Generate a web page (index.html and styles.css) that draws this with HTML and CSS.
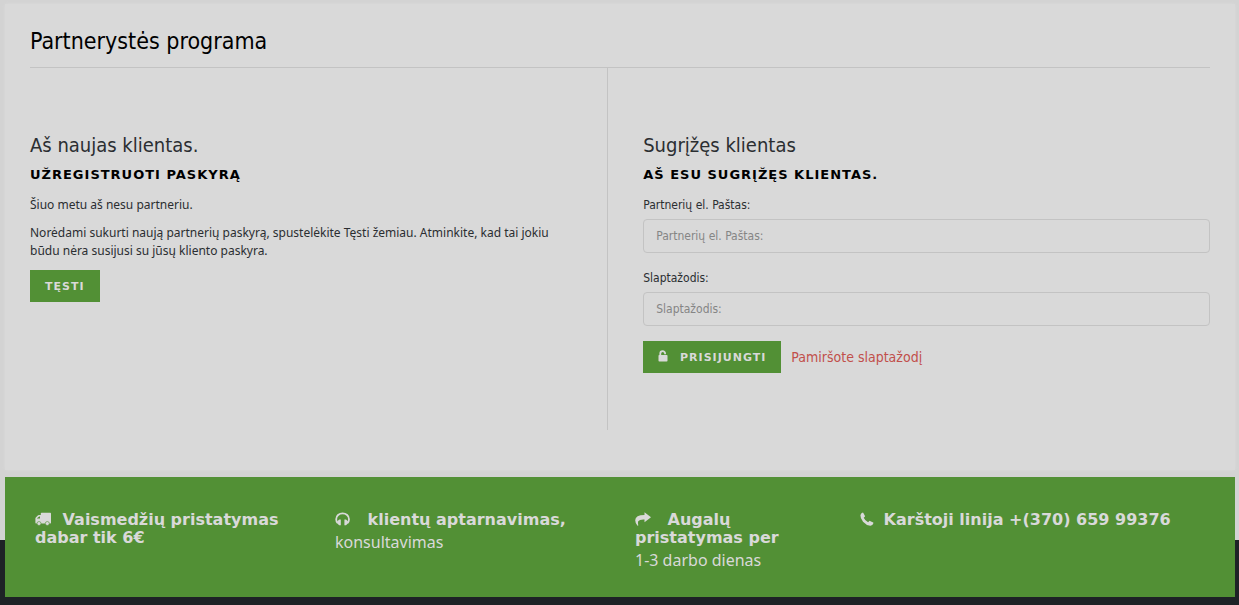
FILE: index.html
```html
<!DOCTYPE html>
<html lang="lt">
<head>
    <meta charset="UTF-8">
    <meta name="viewport" content="width=device-width, initial-scale=1.0">
    <title>Partnerystės programa</title>
    <link rel="stylesheet" href="styles.css">
</head>
<body>
    <div class="page">
        <main class="content">
            <h1>Partnerystės programa</h1>
            <div class="columns">
                <section class="new-client">
                    <h2>Aš naujas klientas.</h2>
                    <h3>Užregistruoti paskyrą</h3>
                    <p>Šiuo metu aš nesu partneriu.</p>
                    <p>Norėdami sukurti naują partnerių paskyrą, spustelėkite Tęsti žemiau. Atminkite, kad tai jokiu būdu nėra susijusi su jūsų kliento paskyra.</p>
                    <button type="button" class="btn">Tęsti</button>
                </section>
                <section class="login">
                    <h2>Sugrįžęs klientas</h2>
                    <h3>Aš esu sugrįžęs klientas.</h3>
                    <form action="#" method="post">
                        <div class="form-group">
                            <label for="email">Partnerių el. Paštas:</label>
                            <input type="text" name="email" id="email" placeholder="Partnerių el. Paštas:">
                        </div>
                        <div class="form-group">
                            <label for="password">Slaptažodis:</label>
                            <input type="password" name="password" id="password" placeholder="Slaptažodis:">
                        </div>
                        <div class="actions">
                            <button type="submit" class="btn">
                                <svg class="lock" viewBox="0 0 10 12" width="10" height="12" aria-hidden="true">
                                    <path d="M2.300 6V3.500a2.400 2.400 0 0 1 4.800 0V4.300" fill="none" stroke="currentColor" stroke-width="1.800"/>
                                    <rect x="0.500" y="5" width="9" height="6.500" rx="0.800" fill="currentColor"/>
                                </svg>
                                Prisijungti
                            </button>
                            <a href="#" class="forgot">Pamiršote slaptažodį</a>
                        </div>
                    </form>
                </section>
            </div>
        </main>
        <div class="promo">
            <div class="promo-item">
                <h4>
                    <svg viewBox="0 0 16 14" width="16" height="14" aria-hidden="true">
                        <path fill="currentColor" fill-rule="evenodd" d="M6.500.8h8.800q.7 0 .7.700v9.300q0 .6-.7.600H1q-.6 0-.6-.6V6.500q0-.6.4-1l2-2q.4-.4 1-.4h2V1.500q0-.7.700-.7zM2 6.500h3V4.400H4.200L2 6.300z"/>
                        <circle cx="4" cy="11.500" r="2" fill="currentColor" stroke="#529035" stroke-width="0.600"/>
                        <circle cx="12.300" cy="11.500" r="2" fill="currentColor" stroke="#529035" stroke-width="0.600"/>
                    </svg>
                    Vaismedžių pristatymas dabar tik 6€
                </h4>
            </div>
            <div class="promo-item">
                <h4>
                    <svg class="wide" viewBox="0 0 16 14" width="16" height="14" aria-hidden="true">
                        <path fill="none" stroke="currentColor" stroke-width="1.800" d="M2.700 11Q1.200 9.500 1.200 7.200a6.400 5.900 0 0 1 12.800 0q0 2.300-1.500 3.800"/>
                        <path fill="currentColor" d="M4.200 7.500h1.600v5.700H4.200L2.300 11.500V9.300zM9.400 7.500H11l1.900 1.800v2.200L11 13.200H9.400z"/>
                    </svg>
                    klientų aptarnavimas,
                </h4>
                <p>konsultavimas</p>
            </div>
            <div class="promo-item">
                <h4>
                    <svg class="wide" viewBox="0 0 16 14" width="16" height="14" aria-hidden="true">
                        <path fill="currentColor" d="M9.500.2 16 5.200l-6.500 5V7.500Q4.500 7.200 3.200 9.200q-.6 1.500.1 4.300l-.8.300Q.2 11 .2 8.200.4 2.900 9.500 2.900z"/>
                    </svg>
                    Augalų pristatymas per
                </h4>
                <p>1-3 darbo dienas</p>
            </div>
            <div class="promo-item">
                <h4>
                    <svg class="phone" viewBox="0 0 14 14" width="14" height="14" aria-hidden="true">
                        <path fill="currentColor" d="M3.200.8 5 4q.1.400-.2.700L3.700 5.800q1.300 3 4.400 4.400l1.200-1.200q.3-.3.700-.1l3.200 1.700q.3.200.2.700-.7 2.500-3.200 2.400Q6.500 13.500 3 9.700.3 6.500.4 3.300.8 1 2.800.6q.3 0 .4.200z"/>
                    </svg>
                    Karštoji linija +(370) 659 99376
                </h4>
            </div>
        </div>
    </div>
    <footer class="footer"></footer>
</body>
</html>
```

FILE: styles.css
```css
* {
    box-sizing: border-box;
}

body {
    margin: 0;
    background-color: #1e2226;
    color: #2b2e31;
    font-family: Tahoma, "DejaVu Sans Condensed", "DejaVu Sans", sans-serif;
    font-size: 12px;
    line-height: 18px;
}

h1, h2, h3, h4, p {
    margin: 0;
    font-weight: normal;
}

p {
    font-family: Tahoma, "Noto Sans", sans-serif;
}

.page {
    padding: 4px 4px 0 5px;
    margin-bottom: -57px;
    background: linear-gradient(#d3d3d3, #d3d3d3) no-repeat;
    background-size: 100% 540px;
}

.content {
    padding: 21px 25px 40px;
    background-color: #d9d9d9;
    box-shadow: 0 0 3px #d9d9d9;
}

h1 {
    padding-bottom: 9px;
    border-bottom: 1px solid #c3c3c3;
    color: #000;
    font-size: 23px;
    line-height: 33px;
}

.columns {
    display: flex;
}

.new-client,
.login {
    min-height: 362px;
    padding-top: 64px;
}

.new-client {
    width: 49%;
    padding-right: 35px;
    border-right: 1px solid #c3c3c3;
}

.login {
    width: 51%;
    padding-left: 35px;
}

h2 {
    font-size: 20px;
    line-height: 26px;
}

h3 {
    margin: 8px 0 12px;
    color: #000;
    font-family: Verdana, "DejaVu Sans", sans-serif;
    font-size: 13px;
    font-weight: bold;
    letter-spacing: 1px;
    text-transform: uppercase;
}

.new-client p {
    margin-bottom: 10px;
}

.btn {
    height: 32px;
    padding: 0 15px;
    border: none;
    background-color: #529035;
    color: #d9d9d9;
    font-family: Verdana, "DejaVu Sans", sans-serif;
    font-size: 11px;
    font-weight: bold;
    letter-spacing: 1px;
    text-transform: uppercase;
    cursor: pointer;
}

.lock {
    margin-right: 7px;
    vertical-align: -1px;
}

.form-group {
    margin-bottom: 15px;
}

.form-group label {
    display: block;
    margin-bottom: 5px;
}

.form-group input {
    display: block;
    width: 100%;
    height: 34px;
    padding: 0 12px;
    border: 1px solid #c3c3c3;
    border-radius: 4px;
    background-color: #d9d9d9;
    color: #2b2e31;
    font: inherit;
}

.form-group + .form-group {
    padding-top: 1px;
}

.form-group input::placeholder {
    color: #858585;
}

.actions {
    display: flex;
    align-items: center;
    gap: 10px;
}

.forgot {
    color: #c14f4b;
    font-size: 14px;
    text-decoration: none;
}

.promo {
    position: relative;
    display: grid;
    grid-template-columns: 4fr 4fr 3fr 5fr;
    min-height: 120px;
    margin-top: 7px;
    padding: 34px 15px 0;
    background-color: #529035;
    color: #d9d9d9;
}

.promo-item {
    padding: 0 15px;
    font-size: 16px;
}

.promo-item h4 {
    margin-bottom: 4px;
    font-family: Verdana, "DejaVu Sans", sans-serif;
    font-size: 16px;
    font-weight: bold;
}

.promo-item svg {
    margin-right: 6px;
    vertical-align: -1px;
}

.promo-item .wide {
    margin-right: 11px;
}

.promo-item .phone {
    margin-right: 4px;
}

.footer {
    height: 65px;
}
```
